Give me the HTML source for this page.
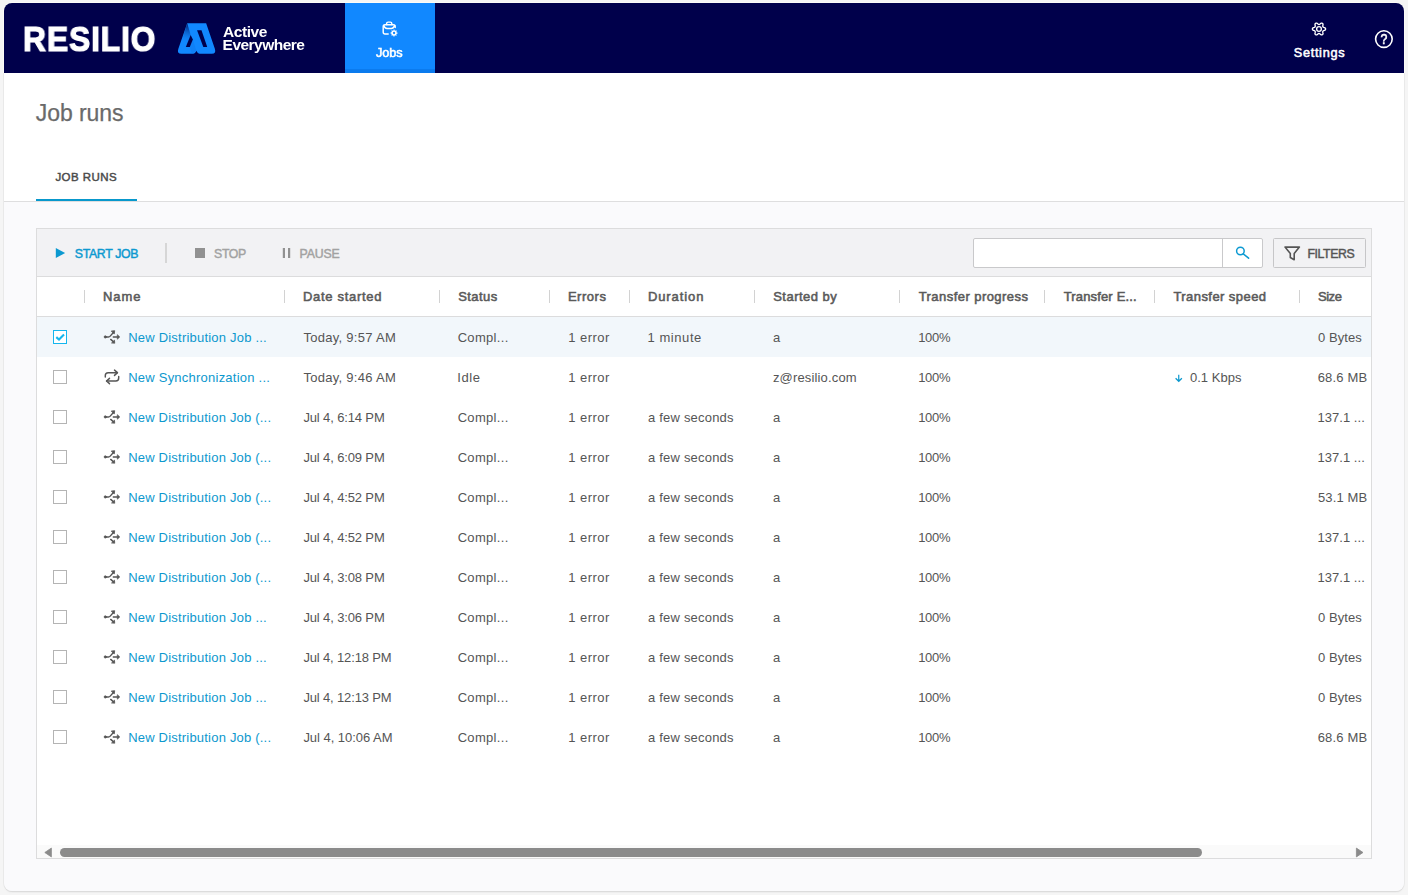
<!DOCTYPE html>
<html lang="en">
<head>
<meta charset="utf-8">
<title>Job runs</title>
<style>
*{box-sizing:border-box;margin:0;padding:0}
html,body{width:1408px;height:895px;overflow:hidden;background:#f5f5f5;font-family:"Liberation Sans",sans-serif;font-size:13px;color:#555}
svg{position:absolute;overflow:visible}
.t{position:absolute;white-space:pre;line-height:20px;height:20px;font-size:13px;font-weight:normal;color:#555}
#ring{position:absolute;left:3px;top:2px;width:1402px;height:72px;border-radius:9px 9px 0 0;background:#fbfbf8}
#frame{position:absolute;left:4px;top:3px;width:1400px;height:888px;border-radius:8px;background:#fafafc;overflow:hidden}
#fshadow{position:absolute;left:4px;top:74px;width:1400px;height:817px;border-radius:0 0 8px 8px;box-shadow:0 1px 0 0 #dcdcdc,0 0 0 1px #e9e9e9,0 2px 1px 0 #eeeeee}
#hdr{position:absolute;left:0;top:0;width:1400px;height:70px;background:#00004b}
#jobs{position:absolute;left:341px;top:0;width:90px;height:70px;background:#1188ff;border-bottom:4px solid #0b7bee}
#white{position:absolute;left:0;top:70px;width:1400px;height:129px;background:#fff;border-bottom:1px solid #dededf}
#tabline{position:absolute;left:32px;top:196px;width:101px;height:2px;background:#0898cc}
#panel{position:absolute;left:32px;top:225px;width:1336px;height:631px;border:1px solid #dcdcdd;background:#fff}
#tb{position:absolute;left:0;top:0;width:1334px;height:48px;background:#f2f2f4;border-bottom:1px solid #dcdcdd}
#th{position:absolute;left:0;top:48px;width:1334px;height:40px;background:#fff;border-bottom:1px solid #dcdcdd}
#rows{position:absolute;left:0;top:88px;width:1334px;height:440px;overflow:hidden}
.row{position:absolute;left:0;width:1334px;height:40px}
.sel{background:#f2f7fb}
.sep{position:absolute;top:13px;width:1px;height:13px;background:#d2d2d2}
.cb{position:absolute;left:16px;top:13px;width:14px;height:14px;border:1px solid #b4b4b4;background:#fff}
.cb.on{border-color:#14b6ee}
.nav{color:#fff}
.brand{color:#fff;font-weight:bold}
.h1{font-size:23px;color:#6a6a6a;line-height:30px;height:30px}
.tab{font-size:12px;color:#4a4a4a}
.hd{color:#5a5a5a}
.lk{color:#0c98ce}
.bt{}
.blue{color:#0c99d0}
.dis{color:#a2a2a2}
#search{position:absolute;left:936px;top:9px;width:290px;height:30px;border:1px solid #c9c9cb;border-radius:2px;background:#fff}
#search i{position:absolute;left:248px;top:0;width:1px;height:28px;background:#c9c9cb}
#filters{position:absolute;left:1236px;top:9px;width:93px;height:30px;border:1px solid #c6c6c8;border-radius:1.5px;background:#f2f2f4}
#tbsep{position:absolute;left:128px;top:14px;width:2px;height:20px;background:#d6d6d6}
#sb{position:absolute;left:0;top:616px;width:1334px;height:13px;background:#fafafa}
#thumb{position:absolute;left:23px;top:3px;width:1142px;height:9px;border-radius:4.5px;background:#8b8b8b}
</style>
</head>
<body>
<svg width="0" height="0" style="left:0;top:0">
<defs>
<linearGradient id="lg" gradientUnits="userSpaceOnUse" x1="183.21" y1="20.87" x2="179.27" y2="40.53"><stop offset="0" stop-color="#00105e" stop-opacity=".9"/><stop offset="1" stop-color="#1188ff" stop-opacity="0"/></linearGradient>
</defs>
</svg>
<div id="ring"></div><div id="fshadow"></div>
<div id="frame">
<div id="hdr"></div>
<div id="jobs"></div>
<span class="t brand" id="resilio" style="will-change:transform;left:18.7px;top:15.75px;font-size:34.2px;line-height:40px;height:40px;transform-origin:0 0;transform:scaleX(.93);letter-spacing:.95px;-webkit-text-stroke:1.2px #fff">RESILIO</span>
<svg style="left:0;top:0" width="300" height="70" viewBox="0 0 300 70">
<path d="M 183.21,20.13 L 202.14,20.13 L 210.84,45.84 Q 212.46,50.86 207.79,50.86 L 196.97,50.86 Q 193.78,50.86 192.40,47.66 Q 191.07,50.86 187.88,50.86 L 177.31,50.86 Q 172.64,50.86 174.36,45.84 Z" fill="#1188ff"/>
<path d="M 183.21,20.13 L 186.65,31.93 L 181.83,44.07 L 175.83,44.07 Z" fill="url(#lg)"/>
<path d="M 188.86,36.50 L 192.40,47.66 L 187.88,50.86 L 185.81,44.07 Z" fill="#0d78ea" opacity=".45"/>
<path d="M 193.04,27.26 L 197.47,27.26 L 203.22,44.07 L 199.33,44.07 Z" fill="#00004b"/>
<path d="M 186.65,31.93 L 188.86,36.50 L 185.81,44.07 L 181.83,44.07 Z" fill="#00004b"/>
</svg>
<span class="t brand" style="left:219.10px;top:18.83px;letter-spacing:-0.46px;font-size:15.5px">Active</span>
<span class="t brand" style="left:218.60px;top:32.43px;letter-spacing:-0.522px;font-size:15.5px">Everywhere</span>
<svg style="left:378px;top:18px" width="16" height="16" viewBox="0 0 16 16" fill="none" stroke="#fff" stroke-width="1.45" stroke-linecap="round" stroke-linejoin="round">
<path d="M6.2 13 H3 Q1.2 13 1.2 11.2 V5.5 Q1.2 3.7 3 3.7 H11.4 Q13.2 3.7 13.2 5.5 V6.6"/>
<path d="M4.6 3.6 V2.6 Q4.6 1.1 6.1 1.1 H8.3 Q9.8 1.1 9.8 2.6 V3.6"/>
<path d="M1.7 4.6 Q3 7.5 5 7.5 H9.4 Q11.4 7.5 12.7 4.6"/>
<path d="M15.51,12.00 L15.50,12.23 L15.48,12.45 L15.44,12.67 L14.57,12.67 L14.52,12.84 L14.46,12.99 L14.39,13.15 L14.31,13.30 L14.22,13.44 L14.80,14.10 L14.65,14.27 L14.50,14.44 L14.33,14.59 L14.16,14.74 L13.98,14.87 L13.36,14.25 L13.21,14.33 L13.05,14.40 L12.90,14.46 L12.73,14.51 L12.57,14.55 L12.51,15.42 L12.29,15.44 L12.06,15.45 L11.83,15.44 L11.61,15.42 L11.39,15.38 L11.39,14.51 L11.22,14.46 L11.07,14.40 L10.91,14.33 L10.76,14.25 L10.14,14.87 L9.96,14.74 L9.79,14.59 L9.62,14.44 L9.47,14.27 L9.32,14.10 L9.19,13.92 L9.81,13.30 L9.73,13.15 L9.66,12.99 L9.60,12.84 L9.55,12.67 L8.68,12.67 L8.64,12.45 L8.62,12.23 L8.61,12.00 L8.62,11.77 L8.64,11.55 L8.68,11.33 L9.55,11.33 L9.60,11.16 L9.66,11.01 L9.73,10.85 L9.81,10.70 L9.90,10.56 L9.32,9.90 L9.47,9.73 L9.62,9.56 L9.79,9.41 L9.96,9.26 L10.62,9.84 L10.76,9.75 L10.91,9.67 L11.07,9.60 L11.22,9.54 L11.39,9.49 L11.55,9.45 L11.61,8.58 L11.83,8.56 L12.06,8.55 L12.29,8.56 L12.51,8.58 L12.57,9.45 L12.73,9.49 L12.90,9.54 L13.05,9.60 L13.21,9.67 L13.36,9.75 L13.50,9.84 L14.16,9.26 L14.33,9.41 L14.50,9.56 L14.65,9.73 L14.80,9.90 L14.93,10.08 L14.31,10.70 L14.39,10.85 L14.46,11.01 L14.52,11.16 L14.57,11.33 L14.61,11.49 L15.48,11.55 L15.50,11.77Z" fill="#fff" stroke="none"/>
<circle cx="12.06" cy="12" r="1.15" fill="#1188ff" stroke="none"/>
</svg>
<span class="t nav" style="left:372.00px;top:39.80px;letter-spacing:-0.067px;font-weight:normal;-webkit-text-stroke:0.55px currentColor;font-size:12.7px">Jobs</span>
<svg style="left:1307px;top:18px" width="16" height="16" viewBox="0 0 16 16" fill="none" stroke="#fff" stroke-width="1.35" stroke-linejoin="round">
<path d="M14.60,8.00 L14.55,8.34 L14.42,8.67 L14.20,8.98 L13.88,9.25 L13.36,9.44 L12.84,9.57 L12.51,9.73 L12.24,9.89 L12.04,10.06 L11.90,10.25 L11.80,10.47 L11.76,10.73 L11.75,11.04 L11.78,11.40 L11.92,11.92 L12.02,12.47 L11.95,12.88 L11.79,13.22 L11.57,13.50 L11.30,13.72 L10.98,13.85 L10.63,13.90 L10.25,13.86 L9.86,13.72 L9.44,13.36 L9.06,12.98 L8.75,12.77 L8.49,12.62 L8.24,12.53 L8.00,12.50 L7.76,12.53 L7.51,12.62 L7.25,12.77 L6.94,12.98 L6.56,13.36 L6.14,13.72 L5.75,13.86 L5.37,13.90 L5.02,13.85 L4.70,13.72 L4.43,13.50 L4.21,13.22 L4.05,12.88 L3.98,12.47 L4.08,11.92 L4.22,11.40 L4.25,11.04 L4.24,10.73 L4.20,10.47 L4.10,10.25 L3.96,10.06 L3.76,9.89 L3.49,9.73 L3.16,9.57 L2.64,9.44 L2.12,9.25 L1.80,8.98 L1.58,8.67 L1.45,8.34 L1.40,8.00 L1.45,7.66 L1.58,7.33 L1.80,7.02 L2.12,6.75 L2.64,6.56 L3.16,6.43 L3.49,6.27 L3.76,6.11 L3.96,5.94 L4.10,5.75 L4.20,5.53 L4.24,5.27 L4.25,4.96 L4.22,4.60 L4.08,4.08 L3.98,3.53 L4.05,3.12 L4.21,2.78 L4.43,2.50 L4.70,2.28 L5.02,2.15 L5.37,2.10 L5.75,2.14 L6.14,2.28 L6.56,2.64 L6.94,3.02 L7.25,3.23 L7.51,3.38 L7.76,3.47 L8.00,3.50 L8.24,3.47 L8.49,3.38 L8.75,3.23 L9.06,3.02 L9.44,2.64 L9.86,2.28 L10.25,2.14 L10.63,2.10 L10.98,2.15 L11.30,2.28 L11.57,2.50 L11.79,2.78 L11.95,3.12 L12.02,3.53 L11.92,4.08 L11.78,4.60 L11.75,4.96 L11.76,5.27 L11.80,5.53 L11.90,5.75 L12.04,5.94 L12.24,6.11 L12.51,6.27 L12.84,6.43 L13.36,6.56 L13.88,6.75 L14.20,7.02 L14.42,7.33 L14.55,7.66Z"/>
<circle cx="8" cy="8" r="2.35"/>
</svg>
<span class="t nav" style="left:1289.75px;top:39.70px;letter-spacing:0.7px;font-weight:normal;-webkit-text-stroke:0.55px currentColor;font-size:12.7px">Settings</span>
<svg style="left:1370px;top:26px;will-change:transform" width="20" height="20" viewBox="0 0 20 20">
<circle cx="9.9" cy="10.1" r="8.3" fill="none" stroke="#fff" stroke-width="1.6"/>
<text transform="translate(10 14.85) scale(.88 1)" x="0" y="0" text-anchor="middle" font-family="Liberation Sans, sans-serif" font-size="14" fill="#fff" stroke="#fff" stroke-width=".55">?</text>
</svg>
<div id="white"></div>
<span class="t h1" style="left:31.75px;top:94.83px;letter-spacing:-0.064px;font-weight:normal;-webkit-text-stroke:0.25px currentColor;">Job runs</span>
<span class="t tab" style="left:51.40px;top:164.22px;letter-spacing:0.457px;font-weight:normal;-webkit-text-stroke:0.45px currentColor;font-size:11.5px">JOB RUNS</span>
<div id="tabline"></div>
<div id="panel">
<div id="tb">
<svg style="left:18px;top:18px" width="11" height="12" viewBox="0 0 11 12"><path d="M0.8 1 L10.1 6.05 L0.8 11.1 Z" fill="#0c99d0"/></svg>
<span class="t bt blue" style="left:37.75px;top:15.04px;letter-spacing:-0.312px;font-weight:normal;-webkit-text-stroke:0.45px currentColor;font-size:12.3px">START JOB</span>
<div id="tbsep"></div>
<svg style="left:158px;top:19px" width="10" height="10" viewBox="0 0 10 10"><rect x="0" y="0" width="10" height="10" fill="#919191"/></svg>
<span class="t bt dis" style="left:177.05px;top:15.04px;letter-spacing:-0.367px;font-weight:normal;-webkit-text-stroke:0.45px currentColor;font-size:12.3px">STOP</span>
<svg style="left:245px;top:19px" width="10" height="10" viewBox="0 0 10 10"><rect x="0.8" y="0" width="2.2" height="10" fill="#919191"/><rect x="6" y="0" width="2.2" height="10" fill="#919191"/></svg>
<span class="t bt dis" style="left:262.55px;top:15.04px;letter-spacing:-0.137px;font-weight:normal;-webkit-text-stroke:0.45px currentColor;font-size:12.3px">PAUSE</span>
<div id="search"><i></i>
<svg style="left:260px;top:5px" width="18" height="18" viewBox="0 0 18 18" fill="none" stroke="#0d9ad2" stroke-width="1.5" stroke-linecap="round"><circle cx="6.4" cy="7" r="3.8"/><path d="M9.3 9.9 L14.6 14.2"/></svg>
</div>
<div id="filters">
<svg style="left:9px;top:6px" width="18" height="16" viewBox="0 0 18 16" fill="none" stroke="#555" stroke-width="1.6" stroke-linejoin="round"><path d="M2 2.1 H16.4 L11.2 8.4 V14.8 L7.3 12.5 V8.4 Z"/></svg>
<span class="t bt" style="left:33.45px;top:5.04px;letter-spacing:-0.417px;font-weight:normal;-webkit-text-stroke:0.45px currentColor;font-size:12.3px">FILTERS</span>
</div>
</div>
<div id="th"><span class="t hd" style="left:65.90px;top:9.70px;letter-spacing:0.983px;font-weight:normal;-webkit-text-stroke:0.55px currentColor;">Name</span><span class="t hd" style="left:265.90px;top:9.70px;letter-spacing:0.7px;font-weight:normal;-webkit-text-stroke:0.55px currentColor;">Date started</span><span class="t hd" style="left:421.15px;top:9.70px;letter-spacing:0.44px;font-weight:normal;-webkit-text-stroke:0.55px currentColor;">Status</span><span class="t hd" style="left:530.90px;top:9.70px;letter-spacing:0.54px;font-weight:normal;-webkit-text-stroke:0.55px currentColor;">Errors</span><span class="t hd" style="left:610.90px;top:9.70px;letter-spacing:0.921px;font-weight:normal;-webkit-text-stroke:0.55px currentColor;">Duration</span><span class="t hd" style="left:736.15px;top:9.70px;letter-spacing:0.494px;font-weight:normal;-webkit-text-stroke:0.55px currentColor;">Started by</span><span class="t hd" style="left:881.65px;top:9.70px;letter-spacing:0.45px;font-weight:normal;-webkit-text-stroke:0.55px currentColor;">Transfer progress</span><span class="t hd" style="left:1026.65px;top:9.70px;letter-spacing:0.163px;font-weight:normal;-webkit-text-stroke:0.55px currentColor;">Transfer E...</span><span class="t hd" style="left:1136.40px;top:9.70px;letter-spacing:0.438px;font-weight:normal;-webkit-text-stroke:0.55px currentColor;">Transfer speed</span><span class="t hd" style="left:1280.95px;top:9.70px;letter-spacing:-0.45px;font-weight:normal;-webkit-text-stroke:0.55px currentColor;">Size</span><div class="sep" style="left:47px"></div><div class="sep" style="left:247px"></div><div class="sep" style="left:402px"></div><div class="sep" style="left:512px"></div><div class="sep" style="left:592px"></div><div class="sep" style="left:717px"></div><div class="sep" style="left:862px"></div><div class="sep" style="left:1007px"></div><div class="sep" style="left:1117px"></div><div class="sep" style="left:1262px"></div></div>
<div id="rows">
<div class="row sel" style="top:0px"><div class="cb on"><svg style="left:0;top:0" width="12" height="12" viewBox="0 0 12 12"><path d="M2.3 6.1 L5 8.5 L10 3.6" fill="none" stroke="#14b6ee" stroke-width="2.1"/></svg></div><svg style="left:66px;top:12px" width="18" height="16" viewBox="0 0 18 16"><g fill="#555" stroke="#555" stroke-width="1.4" stroke-linecap="round" stroke-linejoin="round"><circle cx="2.3" cy="7.94" r="1.15" stroke-width=".7"/><path d="M2.3 7.94 H5.4 Q6.5 7.94 7.2 7.1 L10.6 3.2" fill="none"/><path d="M8.6 2 L11.7 1.7 L11.3 4.7 Z" stroke-width=".8"/><path d="M10.3 7.94 H15" fill="none"/><path d="M14.6 6 L16.7 7.94 L14.6 9.9 Z" stroke-width=".8"/><path d="M7.7 10.4 L10.6 12.9" fill="none"/><path d="M11.7 13.9 L11.5 11.2 L8.8 13.7 Z" stroke-width=".8"/></g></svg><span class="t lk" style="left:91.20px;top:10.50px;letter-spacing:0.211px;">New Distribution Job ...</span><span class="t " style="left:266.40px;top:10.50px;letter-spacing:0.285px;">Today, 9:57 AM</span><span class="t " style="left:420.65px;top:10.50px;letter-spacing:0.314px;">Compl...</span><span class="t " style="left:531.15px;top:10.50px;letter-spacing:0.492px;">1 error</span><span class="t " style="left:610.50px;top:10.50px;letter-spacing:0.564px;">1 minute</span><span class="t " style="left:735.90px;top:10.50px;letter-spacing:0px;">a</span><span class="t " style="left:881.15px;top:10.50px;letter-spacing:-0.267px;">100%</span><span class="t " style="left:1280.90px;top:10.50px;letter-spacing:0.083px;">0 Bytes</span></div>
<div class="row" style="top:40px"><div class="cb"></div><svg style="left:66px;top:12px" width="18" height="16" viewBox="0 0 18 16"><g fill="none" stroke="#555" stroke-width="1.45" stroke-linecap="round" stroke-linejoin="round"><path d="M2.3 8.1 V6.6 Q2.3 3.65 5.2 3.65 H14.3"/><path d="M11.5 1.1 L14.5 3.65 L11.5 6.4"/><path d="M15.7 7.4 V9 Q15.7 12 12.8 12 H3.7"/><path d="M6.5 9.35 L3.5 12 L6.5 14.65"/></g></svg><span class="t lk" style="left:91.20px;top:10.50px;letter-spacing:0.232px;">New Synchronization ...</span><span class="t " style="left:266.40px;top:10.50px;letter-spacing:0.285px;">Today, 9:46 AM</span><span class="t " style="left:420.15px;top:10.50px;letter-spacing:0.65px;">Idle</span><span class="t " style="left:531.15px;top:10.50px;letter-spacing:0.492px;">1 error</span><span class="t " style="left:735.90px;top:10.50px;letter-spacing:0.163px;">z@resilio.com</span><span class="t " style="left:881.15px;top:10.50px;letter-spacing:-0.267px;">100%</span><svg style="left:1137px;top:17px" width="10" height="9" viewBox="0 0 10 9"><path d="M4.75 0.8 V7 M1.6 4.2 L4.75 7.3 L7.9 4.2" fill="none" stroke="#0c98ce" stroke-width="1.2"/></svg><span class="t " style="left:1152.90px;top:10.50px;letter-spacing:0.029px;">0.1 Kbps</span><span class="t " style="left:1280.65px;top:10.50px;letter-spacing:0.2px;">68.6 MB</span></div>
<div class="row" style="top:80px"><div class="cb"></div><svg style="left:66px;top:12px" width="18" height="16" viewBox="0 0 18 16"><g fill="#555" stroke="#555" stroke-width="1.4" stroke-linecap="round" stroke-linejoin="round"><circle cx="2.3" cy="7.94" r="1.15" stroke-width=".7"/><path d="M2.3 7.94 H5.4 Q6.5 7.94 7.2 7.1 L10.6 3.2" fill="none"/><path d="M8.6 2 L11.7 1.7 L11.3 4.7 Z" stroke-width=".8"/><path d="M10.3 7.94 H15" fill="none"/><path d="M14.6 6 L16.7 7.94 L14.6 9.9 Z" stroke-width=".8"/><path d="M7.7 10.4 L10.6 12.9" fill="none"/><path d="M11.7 13.9 L11.5 11.2 L8.8 13.7 Z" stroke-width=".8"/></g></svg><span class="t lk" style="left:91.20px;top:10.50px;letter-spacing:0.202px;">New Distribution Job (...</span><span class="t " style="left:266.40px;top:10.50px;letter-spacing:-0.135px;">Jul 4, 6:14 PM</span><span class="t " style="left:420.65px;top:10.50px;letter-spacing:0.314px;">Compl...</span><span class="t " style="left:531.15px;top:10.50px;letter-spacing:0.492px;">1 error</span><span class="t " style="left:611.00px;top:10.50px;letter-spacing:0.204px;">a few seconds</span><span class="t " style="left:735.90px;top:10.50px;letter-spacing:0px;">a</span><span class="t " style="left:881.15px;top:10.50px;letter-spacing:-0.267px;">100%</span><span class="t " style="left:1280.40px;top:10.50px;letter-spacing:0.056px;">137.1 ...</span></div>
<div class="row" style="top:120px"><div class="cb"></div><svg style="left:66px;top:12px" width="18" height="16" viewBox="0 0 18 16"><g fill="#555" stroke="#555" stroke-width="1.4" stroke-linecap="round" stroke-linejoin="round"><circle cx="2.3" cy="7.94" r="1.15" stroke-width=".7"/><path d="M2.3 7.94 H5.4 Q6.5 7.94 7.2 7.1 L10.6 3.2" fill="none"/><path d="M8.6 2 L11.7 1.7 L11.3 4.7 Z" stroke-width=".8"/><path d="M10.3 7.94 H15" fill="none"/><path d="M14.6 6 L16.7 7.94 L14.6 9.9 Z" stroke-width=".8"/><path d="M7.7 10.4 L10.6 12.9" fill="none"/><path d="M11.7 13.9 L11.5 11.2 L8.8 13.7 Z" stroke-width=".8"/></g></svg><span class="t lk" style="left:91.20px;top:10.50px;letter-spacing:0.202px;">New Distribution Job (...</span><span class="t " style="left:266.40px;top:10.50px;letter-spacing:-0.135px;">Jul 4, 6:09 PM</span><span class="t " style="left:420.65px;top:10.50px;letter-spacing:0.314px;">Compl...</span><span class="t " style="left:531.15px;top:10.50px;letter-spacing:0.492px;">1 error</span><span class="t " style="left:611.00px;top:10.50px;letter-spacing:0.204px;">a few seconds</span><span class="t " style="left:735.90px;top:10.50px;letter-spacing:0px;">a</span><span class="t " style="left:881.15px;top:10.50px;letter-spacing:-0.267px;">100%</span><span class="t " style="left:1280.40px;top:10.50px;letter-spacing:0.056px;">137.1 ...</span></div>
<div class="row" style="top:160px"><div class="cb"></div><svg style="left:66px;top:12px" width="18" height="16" viewBox="0 0 18 16"><g fill="#555" stroke="#555" stroke-width="1.4" stroke-linecap="round" stroke-linejoin="round"><circle cx="2.3" cy="7.94" r="1.15" stroke-width=".7"/><path d="M2.3 7.94 H5.4 Q6.5 7.94 7.2 7.1 L10.6 3.2" fill="none"/><path d="M8.6 2 L11.7 1.7 L11.3 4.7 Z" stroke-width=".8"/><path d="M10.3 7.94 H15" fill="none"/><path d="M14.6 6 L16.7 7.94 L14.6 9.9 Z" stroke-width=".8"/><path d="M7.7 10.4 L10.6 12.9" fill="none"/><path d="M11.7 13.9 L11.5 11.2 L8.8 13.7 Z" stroke-width=".8"/></g></svg><span class="t lk" style="left:91.20px;top:10.50px;letter-spacing:0.202px;">New Distribution Job (...</span><span class="t " style="left:266.40px;top:10.50px;letter-spacing:-0.135px;">Jul 4, 4:52 PM</span><span class="t " style="left:420.65px;top:10.50px;letter-spacing:0.314px;">Compl...</span><span class="t " style="left:531.15px;top:10.50px;letter-spacing:0.492px;">1 error</span><span class="t " style="left:611.00px;top:10.50px;letter-spacing:0.204px;">a few seconds</span><span class="t " style="left:735.90px;top:10.50px;letter-spacing:0px;">a</span><span class="t " style="left:881.15px;top:10.50px;letter-spacing:-0.267px;">100%</span><span class="t " style="left:1280.90px;top:10.50px;letter-spacing:0.158px;">53.1 MB</span></div>
<div class="row" style="top:200px"><div class="cb"></div><svg style="left:66px;top:12px" width="18" height="16" viewBox="0 0 18 16"><g fill="#555" stroke="#555" stroke-width="1.4" stroke-linecap="round" stroke-linejoin="round"><circle cx="2.3" cy="7.94" r="1.15" stroke-width=".7"/><path d="M2.3 7.94 H5.4 Q6.5 7.94 7.2 7.1 L10.6 3.2" fill="none"/><path d="M8.6 2 L11.7 1.7 L11.3 4.7 Z" stroke-width=".8"/><path d="M10.3 7.94 H15" fill="none"/><path d="M14.6 6 L16.7 7.94 L14.6 9.9 Z" stroke-width=".8"/><path d="M7.7 10.4 L10.6 12.9" fill="none"/><path d="M11.7 13.9 L11.5 11.2 L8.8 13.7 Z" stroke-width=".8"/></g></svg><span class="t lk" style="left:91.20px;top:10.50px;letter-spacing:0.202px;">New Distribution Job (...</span><span class="t " style="left:266.40px;top:10.50px;letter-spacing:-0.135px;">Jul 4, 4:52 PM</span><span class="t " style="left:420.65px;top:10.50px;letter-spacing:0.314px;">Compl...</span><span class="t " style="left:531.15px;top:10.50px;letter-spacing:0.492px;">1 error</span><span class="t " style="left:611.00px;top:10.50px;letter-spacing:0.204px;">a few seconds</span><span class="t " style="left:735.90px;top:10.50px;letter-spacing:0px;">a</span><span class="t " style="left:881.15px;top:10.50px;letter-spacing:-0.267px;">100%</span><span class="t " style="left:1280.40px;top:10.50px;letter-spacing:0.056px;">137.1 ...</span></div>
<div class="row" style="top:240px"><div class="cb"></div><svg style="left:66px;top:12px" width="18" height="16" viewBox="0 0 18 16"><g fill="#555" stroke="#555" stroke-width="1.4" stroke-linecap="round" stroke-linejoin="round"><circle cx="2.3" cy="7.94" r="1.15" stroke-width=".7"/><path d="M2.3 7.94 H5.4 Q6.5 7.94 7.2 7.1 L10.6 3.2" fill="none"/><path d="M8.6 2 L11.7 1.7 L11.3 4.7 Z" stroke-width=".8"/><path d="M10.3 7.94 H15" fill="none"/><path d="M14.6 6 L16.7 7.94 L14.6 9.9 Z" stroke-width=".8"/><path d="M7.7 10.4 L10.6 12.9" fill="none"/><path d="M11.7 13.9 L11.5 11.2 L8.8 13.7 Z" stroke-width=".8"/></g></svg><span class="t lk" style="left:91.20px;top:10.50px;letter-spacing:0.202px;">New Distribution Job (...</span><span class="t " style="left:266.40px;top:10.50px;letter-spacing:-0.135px;">Jul 4, 3:08 PM</span><span class="t " style="left:420.65px;top:10.50px;letter-spacing:0.314px;">Compl...</span><span class="t " style="left:531.15px;top:10.50px;letter-spacing:0.492px;">1 error</span><span class="t " style="left:611.00px;top:10.50px;letter-spacing:0.204px;">a few seconds</span><span class="t " style="left:735.90px;top:10.50px;letter-spacing:0px;">a</span><span class="t " style="left:881.15px;top:10.50px;letter-spacing:-0.267px;">100%</span><span class="t " style="left:1280.40px;top:10.50px;letter-spacing:0.056px;">137.1 ...</span></div>
<div class="row" style="top:280px"><div class="cb"></div><svg style="left:66px;top:12px" width="18" height="16" viewBox="0 0 18 16"><g fill="#555" stroke="#555" stroke-width="1.4" stroke-linecap="round" stroke-linejoin="round"><circle cx="2.3" cy="7.94" r="1.15" stroke-width=".7"/><path d="M2.3 7.94 H5.4 Q6.5 7.94 7.2 7.1 L10.6 3.2" fill="none"/><path d="M8.6 2 L11.7 1.7 L11.3 4.7 Z" stroke-width=".8"/><path d="M10.3 7.94 H15" fill="none"/><path d="M14.6 6 L16.7 7.94 L14.6 9.9 Z" stroke-width=".8"/><path d="M7.7 10.4 L10.6 12.9" fill="none"/><path d="M11.7 13.9 L11.5 11.2 L8.8 13.7 Z" stroke-width=".8"/></g></svg><span class="t lk" style="left:91.20px;top:10.50px;letter-spacing:0.211px;">New Distribution Job ...</span><span class="t " style="left:266.40px;top:10.50px;letter-spacing:-0.135px;">Jul 4, 3:06 PM</span><span class="t " style="left:420.65px;top:10.50px;letter-spacing:0.314px;">Compl...</span><span class="t " style="left:531.15px;top:10.50px;letter-spacing:0.492px;">1 error</span><span class="t " style="left:611.00px;top:10.50px;letter-spacing:0.204px;">a few seconds</span><span class="t " style="left:735.90px;top:10.50px;letter-spacing:0px;">a</span><span class="t " style="left:881.15px;top:10.50px;letter-spacing:-0.267px;">100%</span><span class="t " style="left:1280.90px;top:10.50px;letter-spacing:0.083px;">0 Bytes</span></div>
<div class="row" style="top:320px"><div class="cb"></div><svg style="left:66px;top:12px" width="18" height="16" viewBox="0 0 18 16"><g fill="#555" stroke="#555" stroke-width="1.4" stroke-linecap="round" stroke-linejoin="round"><circle cx="2.3" cy="7.94" r="1.15" stroke-width=".7"/><path d="M2.3 7.94 H5.4 Q6.5 7.94 7.2 7.1 L10.6 3.2" fill="none"/><path d="M8.6 2 L11.7 1.7 L11.3 4.7 Z" stroke-width=".8"/><path d="M10.3 7.94 H15" fill="none"/><path d="M14.6 6 L16.7 7.94 L14.6 9.9 Z" stroke-width=".8"/><path d="M7.7 10.4 L10.6 12.9" fill="none"/><path d="M11.7 13.9 L11.5 11.2 L8.8 13.7 Z" stroke-width=".8"/></g></svg><span class="t lk" style="left:91.20px;top:10.50px;letter-spacing:0.211px;">New Distribution Job ...</span><span class="t " style="left:266.40px;top:10.50px;letter-spacing:-0.15px;">Jul 4, 12:18 PM</span><span class="t " style="left:420.65px;top:10.50px;letter-spacing:0.314px;">Compl...</span><span class="t " style="left:531.15px;top:10.50px;letter-spacing:0.492px;">1 error</span><span class="t " style="left:611.00px;top:10.50px;letter-spacing:0.204px;">a few seconds</span><span class="t " style="left:735.90px;top:10.50px;letter-spacing:0px;">a</span><span class="t " style="left:881.15px;top:10.50px;letter-spacing:-0.267px;">100%</span><span class="t " style="left:1280.90px;top:10.50px;letter-spacing:0.083px;">0 Bytes</span></div>
<div class="row" style="top:360px"><div class="cb"></div><svg style="left:66px;top:12px" width="18" height="16" viewBox="0 0 18 16"><g fill="#555" stroke="#555" stroke-width="1.4" stroke-linecap="round" stroke-linejoin="round"><circle cx="2.3" cy="7.94" r="1.15" stroke-width=".7"/><path d="M2.3 7.94 H5.4 Q6.5 7.94 7.2 7.1 L10.6 3.2" fill="none"/><path d="M8.6 2 L11.7 1.7 L11.3 4.7 Z" stroke-width=".8"/><path d="M10.3 7.94 H15" fill="none"/><path d="M14.6 6 L16.7 7.94 L14.6 9.9 Z" stroke-width=".8"/><path d="M7.7 10.4 L10.6 12.9" fill="none"/><path d="M11.7 13.9 L11.5 11.2 L8.8 13.7 Z" stroke-width=".8"/></g></svg><span class="t lk" style="left:91.20px;top:10.50px;letter-spacing:0.211px;">New Distribution Job ...</span><span class="t " style="left:266.40px;top:10.50px;letter-spacing:-0.15px;">Jul 4, 12:13 PM</span><span class="t " style="left:420.65px;top:10.50px;letter-spacing:0.314px;">Compl...</span><span class="t " style="left:531.15px;top:10.50px;letter-spacing:0.492px;">1 error</span><span class="t " style="left:611.00px;top:10.50px;letter-spacing:0.204px;">a few seconds</span><span class="t " style="left:735.90px;top:10.50px;letter-spacing:0px;">a</span><span class="t " style="left:881.15px;top:10.50px;letter-spacing:-0.267px;">100%</span><span class="t " style="left:1280.90px;top:10.50px;letter-spacing:0.083px;">0 Bytes</span></div>
<div class="row" style="top:400px"><div class="cb"></div><svg style="left:66px;top:12px" width="18" height="16" viewBox="0 0 18 16"><g fill="#555" stroke="#555" stroke-width="1.4" stroke-linecap="round" stroke-linejoin="round"><circle cx="2.3" cy="7.94" r="1.15" stroke-width=".7"/><path d="M2.3 7.94 H5.4 Q6.5 7.94 7.2 7.1 L10.6 3.2" fill="none"/><path d="M8.6 2 L11.7 1.7 L11.3 4.7 Z" stroke-width=".8"/><path d="M10.3 7.94 H15" fill="none"/><path d="M14.6 6 L16.7 7.94 L14.6 9.9 Z" stroke-width=".8"/><path d="M7.7 10.4 L10.6 12.9" fill="none"/><path d="M11.7 13.9 L11.5 11.2 L8.8 13.7 Z" stroke-width=".8"/></g></svg><span class="t lk" style="left:91.20px;top:10.50px;letter-spacing:0.202px;">New Distribution Job (...</span><span class="t " style="left:266.40px;top:10.50px;letter-spacing:-0.039px;">Jul 4, 10:06 AM</span><span class="t " style="left:420.65px;top:10.50px;letter-spacing:0.314px;">Compl...</span><span class="t " style="left:531.15px;top:10.50px;letter-spacing:0.492px;">1 error</span><span class="t " style="left:611.00px;top:10.50px;letter-spacing:0.204px;">a few seconds</span><span class="t " style="left:735.90px;top:10.50px;letter-spacing:0px;">a</span><span class="t " style="left:881.15px;top:10.50px;letter-spacing:-0.267px;">100%</span><span class="t " style="left:1280.65px;top:10.50px;letter-spacing:0.2px;">68.6 MB</span></div>
</div>
<div id="sb">
<svg style="left:0;top:0" width="1334" height="13" viewBox="0 0 1334 13"><path d="M7.8 7.5 L14.4 3.1 V11.9 Z" fill="#8b8b8b" stroke="#8b8b8b" stroke-width=".8" stroke-linejoin="round"/><path d="M1326 7.5 L1319.4 3.1 V11.9 Z" fill="#8b8b8b" stroke="#8b8b8b" stroke-width=".8" stroke-linejoin="round"/></svg>
<div id="thumb"></div>
</div>
</div>
</div>
</body>
</html>
